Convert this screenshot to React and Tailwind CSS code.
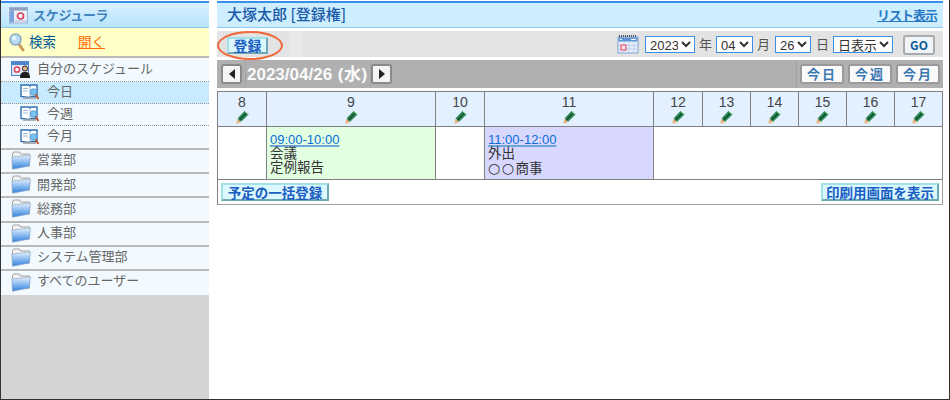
import React from "react";

const FONT = '"Noto Sans CJK JP", "Liberation Sans", sans-serif';

// Small calendar used in the date picker
const CalendarIcon = () => (
  <svg className="w-[22px] h-[20px] mr-[6px]" viewBox="0 0 22 20">
    <rect x="1" y="3" width="20" height="16" fill="#e6f0fb" stroke="#7fa3d4" />
    <rect x="1.5" y="3.5" width="19" height="4" fill="#5f93d8" />
    <path d="M2 2h18" stroke="#555" strokeDasharray="1 1" strokeWidth="2" />
    <path d="M3 5.5h2M14 5.5h5" stroke="#fff" />
    <path d="M1 11.5h20M1 15h20M7 8v11M12 8v11M17 8v11" stroke="#bcd0ea" />
    <rect x="4" y="11" width="5" height="5" fill="#fbe3e6" stroke="#e8708a" strokeWidth="1.4" />
  </svg>
);

const HeaderCalendar = () => (
  <svg className="w-[19px] h-[18px] shrink-0" viewBox="0 0 19 18">
    <rect x="0.5" y="1.5" width="18" height="15.5" fill="#e9eef8" stroke="#9fb2d2" />
    <rect x="1" y="2" width="17" height="2.5" fill="#8e9fc0" />
    <rect x="1" y="4.5" width="4" height="12" fill="#7ba4dc" />
    <circle cx="11.5" cy="10" r="3" fill="#fff" stroke="#e0405c" strokeWidth="1.7" />
    <path d="M6 15h12" stroke="#a9bcda" />
  </svg>
);

const PersonCalendar = () => (
  <svg className="w-[20px] h-[18px] shrink-0" viewBox="0 0 20 18">
    <rect x="0.5" y="1.5" width="17" height="14" fill="#dfe9f8" stroke="#4f83cc" />
    <rect x="1" y="2" width="16" height="3" fill="#4f83cc" />
    <circle cx="6" cy="9.5" r="2.6" fill="#fff" stroke="#e0405c" strokeWidth="1.5" />
    <circle cx="14" cy="8.5" r="2.6" fill="#e8b58e" stroke="#222" />
    <path d="M9 18c0-5 2-6 5-6s5 1 5 6z" fill="#1c1c1c" />
  </svg>
);

const BookLens = () => (
  <svg className="w-[20px] h-[20px] shrink-0" viewBox="0 0 20 20">
    <path d="M1 3h8l1 1 1-1h6v11.5H10l-1 1-8-1z" fill="#fff" stroke="#2f6fb5" strokeWidth="1.4" />
    <path d="M3 16h13" stroke="#a0a0a0" strokeWidth="1.6" />
    <path d="M10 4v11M3 6.5h5M3 9h5" stroke="#9dbde0" />
    <circle cx="13.5" cy="10" r="3.2" fill="#76c4f2" stroke="#5d9fd0" />
    <path d="M15.5 12.5l3 4.5" stroke="#c0583a" strokeWidth="2" />
  </svg>
);

const FolderIcon = () => (
  <svg className="w-[20px] h-[20px] shrink-0" viewBox="0 0 20 20">
    <defs>
      <linearGradient id="folderFill" x1="0" y1="0" x2="0" y2="1">
        <stop offset="0" stopColor="#e6f4ff" />
        <stop offset="1" stopColor="#2f80e0" />
      </linearGradient>
    </defs>
    <path d="M1.5 4l1-2h6l1 2h9v12H1.5z" fill="#f4f4f4" stroke="#a0a0a0" />
    <path d="M0.8 7L19.5 5l-1.2 11L1.5 19.2z" fill="url(#folderFill)" stroke="#8fa6bb" strokeWidth="0.7" />
  </svg>
);

const SearchIcon = () => (
  <svg className="w-[16px] h-[20px] shrink-0" viewBox="0 0 16 20">
    <path d="M9.5 11.5l4.5 6.5" stroke="#c89a5c" strokeWidth="3" strokeLinecap="round" />
    <circle cx="6.5" cy="7.5" r="5.5" fill="#bcdcf6" stroke="#8fa9c2" strokeWidth="1.5" />
    <circle cx="5" cy="6" r="2" fill="#eef7ff" />
  </svg>
);

const PencilIcon = () => (
  <svg className="w-[13px] h-[14px]" viewBox="0 0 12 13">
    <path d="M0.3 12.7l0.9-4.7 3.6 3.4z" fill="#e8b27a" />
    <path d="M1.5 7.6L8 0.8l3.8 3.2-7 7z" fill="#2f8a5a" />
    <path d="M3 9.6L9.6 2.6" stroke="#14532d" strokeWidth="1.5" />
    <path d="M8.2 1l3.4 3" stroke="#c9e8c9" />
  </svg>
);

const SectionRow = ({ label, last }) => (
  <div
    className={`h-[24.2px] pb-[2px] flex items-center pl-[10px] gap-[6px] bg-[#f3faff] text-[13px] text-[#666] ${
      last ? "" : "border-b-2 border-[#b9b9b9]"
    }`}
  >
    <FolderIcon />
    <span className={last ? "mb-[4px]" : "mb-[2px]"}>{label}</span>
  </div>
);

const SubRow = ({ label, active, last }) => (
  <div
    className={`flex items-center pl-[19px] gap-[7px] pb-[1px] text-[13px] text-[#666] ${
      active ? "bg-[#c8ebff]" : "bg-[#f3faff]"
    } ${last ? "h-[24px] border-b-2 border-solid border-[#b9b9b9]" : "h-[22px] border-b border-dotted border-[#999]"}`}
  >
    <BookLens />
    <span className={last ? "mb-[4px]" : "mb-[2px]"}>{label}</span>
  </div>
);

const Sidebar = () => (
  <aside className="w-[208px] shrink-0 bg-[#d4d4d4] flex flex-col">
    <div className="h-[27px] pb-[1px] flex items-center pl-[8px] gap-[5px] border-t-2 border-b border-t-[#3b8fe6] border-b-[#8fcbf0] bg-gradient-to-b from-[#d9f1ff] to-[#b8e4fc]">
      <HeaderCalendar />
      <span className="text-[13px] font-bold tracking-[-0.3px] text-[#4384c0]">スケジューラ</span>
    </div>
    <div className="h-[30px] pb-[1px] flex items-center pl-[8px] bg-[#ffffc8] border-b-2 border-[#b9b9b9] text-[13.5px]">
      <SearchIcon />
      <span className="ml-[4px] text-[#005a96]">検索</span>
      <span className="ml-[22px] text-[#ff6a00] underline">開く</span>
    </div>
    <div className="h-[24px] pb-[2px] flex items-center pl-[10px] gap-[6px] bg-[#f3faff] border-b border-dotted border-[#999] text-[13px] text-[#666]">
      <PersonCalendar />
      <span className="mb-[2px]">自分のスケジュール</span>
    </div>
    <SubRow label="今日" active />
    <SubRow label="今週" />
    <SubRow label="今月" last />
    <SectionRow label="営業部" />
    <SectionRow label="開発部" />
    <SectionRow label="総務部" />
    <SectionRow label="人事部" />
    <SectionRow label="システム管理部" />
    <SectionRow label="すべてのユーザー" last />
  </aside>
);

const DateSelect = ({ value, className }) => (
  <select
    defaultValue={value}
    className={`h-[17px] p-0 border border-[#3b8fe6] bg-white text-[13px] text-[#333] font-['Liberation_Sans','Noto_Sans_CJK_JP',sans-serif] ${className}`}
  >
    <option>{value}</option>
  </select>
);

const Toolbar = () => (
  <div className="relative h-[26px] mt-[3px] bg-[#e3e3e3] flex items-center text-[13px] text-[#555]">
    <button className="ml-[10px] mt-[2px] w-[41px] h-[17px] flex items-center justify-center bg-[#dcf8ff] border-2 border-[#a2e0ea] border-r-[#6fa9b8] border-b-[#6fa9b8] text-[14px] font-bold text-[#1a5ec4]">
      登録
    </button>
    <div className="ml-[22px] w-[12px] h-full bg-[#e9e9e9]" />
    <div className="ml-auto flex items-center">
      <CalendarIcon />
      <DateSelect value="2023" className="w-[50px]" />
      <span className="mx-[4px]">年</span>
      <DateSelect value="04" className="w-[37px]" />
      <span className="ml-[4px] mr-[5px]">月</span>
      <DateSelect value="26" className="w-[36px]" />
      <span className="ml-[5px] mr-[4px]">日</span>
      <DateSelect value="日表示" className="w-[60px]" />
      <button className="ml-[10px] mr-[8px] mt-[1px] w-[32px] h-[20px] rounded-[3px] bg-[#f0f5fa] border-2 border-[#aaa] text-[12px] leading-none font-bold text-[#0f5a96]">
        GO
      </button>
    </div>
    {/* Orange circle drawn over the register button */}
    <div className="absolute left-0 top-0 w-[66px] h-[29px] rounded-[50%] border-2 border-[#f0683a]" />
  </div>
);

const ArrowButton = ({ dir }) => (
  <button className="w-[21px] h-[20px] rounded-[3px] bg-[#f5f5f5] border-2 border-[#8a8a8a] flex items-center justify-center">
    <svg className="w-[8px] h-[10px]" viewBox="0 0 8 10">
      <path d={dir === "left" ? "M7 0v10L1 5z" : "M1 0v10l6-5z"} fill="#222" />
    </svg>
  </button>
);

const RangeButton = ({ label }) => (
  <button className="w-[44px] h-[20px] rounded-[3px] bg-[#fafafa] border-2 border-[#9a9a9a] text-[13px] font-bold tracking-[2px] text-[#3d78b0] flex items-center justify-center">
    {label}
  </button>
);

const DateNav = () => (
  <div className="h-[28px] mt-[3px] bg-[#b0b0b0] flex items-center pl-[4px] pr-[3px]">
    <ArrowButton dir="left" />
    <div className="ml-[3px] h-full pl-[1px] w-[126px] flex items-center border-x border-[#a4a4a4]">
      <span className="text-[17px] font-bold text-[#fbfbfb] leading-none font-['Liberation_Sans','Noto_Sans_CJK_JP',sans-serif]">
        2023/04/26 <span className="ml-[1px] tracking-[0.5px]">(水)</span>
      </span>
    </div>
    <ArrowButton dir="right" />
    <div className="ml-auto flex gap-[4px] border-l border-[#a4a4a4] pl-[3px] h-full items-center">
      <RangeButton label="今日" />
      <RangeButton label="今週" />
      <RangeButton label="今月" />
    </div>
  </div>
);

const hours = [8, 9, 10, 11, 12, 13, 14, 15, 16, 17];

const HourCell = ({ hour }) => (
  <div className="h-[35px] bg-[#e2f0ff] border-r border-b border-[#808080] flex flex-col items-center text-[14px] leading-[16px] text-[#444] font-['Liberation_Sans',sans-serif]">
    <span className="mt-[2px]">{hour}</span>
    <PencilIcon />
  </div>
);

const EventCell = ({ time, title, note, className }) => (
  <div className={`h-[53px] border-r border-b border-[#808080] pl-[3px] pt-[6px] text-[13.5px] leading-[14px] text-[#333] font-['Liberation_Sans','Noto_Sans_CJK_JP',sans-serif] ${className}`}>
    <a className="block w-fit text-[13px] text-[#0a6ed8] underline decoration-2 decoration-[#6ea6d8]">{time}</a>
    <div>{title}</div>
    <div>{note}</div>
  </div>
);

const FootButton = ({ label, className }) => (
  <button className={`h-[18px] flex items-center justify-center bg-[#dcf8ff] border-2 border-[#a2e0ea] border-r-[#6fa9b8] border-b-[#6fa9b8] text-[13.5px] font-bold text-[#1a5ec4] ${className}`}>
    {label}
  </button>
);

const ScheduleTable = () => (
  <div className="mt-[3px] w-[726px] border-l border-t border-[#808080] grid grid-cols-[49px_169px_49px_169px_49px_48px_48px_48px_48px_48px]">
    {hours.map((h) => (
      <HourCell key={h} hour={h} />
    ))}
    <div className="h-[53px] border-r border-b border-[#808080] bg-white" />
    <EventCell time="09:00-10:00" title="会議" note="定例報告" className="bg-[#e2ffe2]" />
    <div className="h-[53px] border-r border-b border-[#808080] bg-white" />
    <EventCell
      time="11:00-12:00"
      title="外出"
      note={
        <>
          <span className="font-['DejaVu_Sans',sans-serif] text-[14px] tracking-[1.5px]">○○</span>商事
        </>
      }
      className="bg-[#d8d8ff]"
    />
    <div className="col-span-6 h-[53px] border-r border-b border-[#808080] bg-white" />
    <div className="col-span-10 h-[25px] border-r border-b border-[#a0a0a0] flex items-center justify-between pl-[3px] pr-[3px]">
      <FootButton label="予定の一括登録" className="w-[108px]" />
      <FootButton label="印刷用画面を表示" className="w-[118px]" />
    </div>
  </div>
);

export default function App() {
  return (
    <div
      className="w-[950px] h-[400px] flex bg-white border border-[#333] border-t-0 pt-[1px] overflow-hidden"
      style={{ fontFamily: FONT }}
    >
      <Sidebar />
      <main className="ml-[8px] w-[726px]">
        <div className="h-[27px] pb-[1px] flex items-center justify-between pl-[10px] pr-[6px] border-t-2 border-b border-t-[#3b8fe6] border-b-[#8fcbf0] bg-[#cdeeff]">
          <span className="text-[15px] font-medium text-[#1a5aa8]">大塚太郎 [登録権]</span>
          <a className="text-[13px] font-bold tracking-[-1px] text-[#2a78c4] underline">リスト表示</a>
        </div>
        <Toolbar />
        <DateNav />
        <ScheduleTable />
      </main>
    </div>
  );
}
